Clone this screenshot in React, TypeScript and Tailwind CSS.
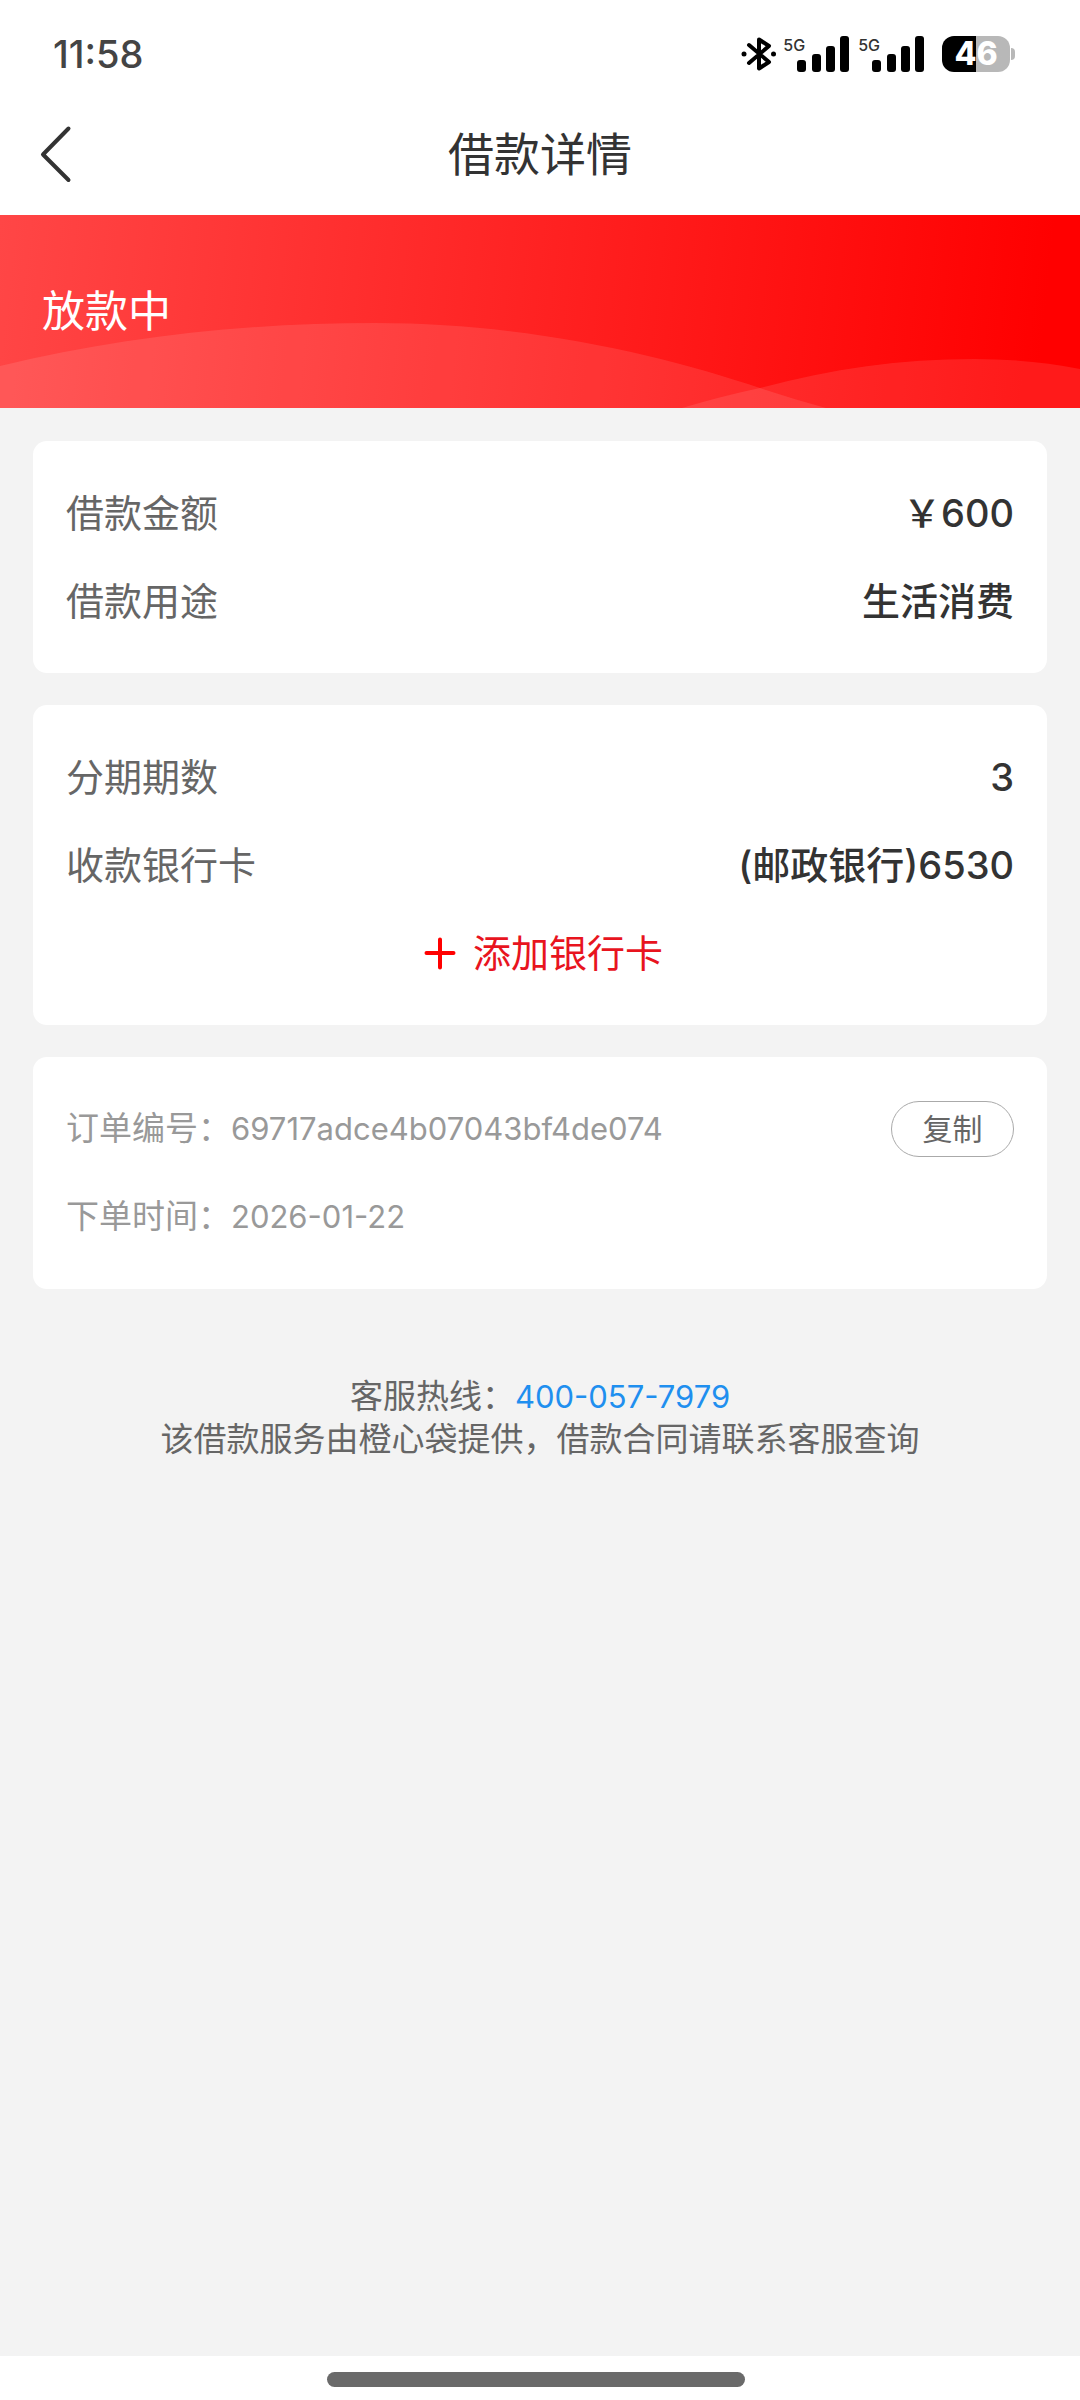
import type { ReactNode } from "react";

const SIGNAL_BARS = [
  { x: 0, y: 24 },
  { x: 15, y: 18 },
  { x: 29, y: 10 },
  { x: 43, y: 0 },
];

const LOAN_ROWS = [
  { label: "借款金额", value: "￥600" },
  { label: "借款用途", value: "生活消费" },
];

const REPAY_ROWS = [
  { label: "分期期数", value: "3" },
  { label: "收款银行卡", value: "(邮政银行)6530" },
];

const ORDER_NO = "69717adce4b07043bf4de074";

const BluetoothIcon = () => (
  <svg width="36" height="36" viewBox="0 0 36 36" fill="none" aria-hidden="true">
    <path
      d="M8 9 28 26 18 32.500V3.500L28 10 8 27"
      stroke="#000"
      strokeWidth="4"
      strokeLinejoin="round"
      strokeLinecap="round"
    />
    <circle cx="3" cy="18" r="2.500" fill="#000" />
    <circle cx="32.500" cy="18" r="2.500" fill="#000" />
  </svg>
);

const Signal = () => (
  <div className="flex">
    <span className="-mr-2 pt-0.5 text-base leading-none font-medium text-[#333]">
      5G
    </span>
    <svg width="53" height="38" viewBox="0 0 53 38" aria-hidden="true">
      {SIGNAL_BARS.map(({ x, y }) => (
        <rect key={x} x={x} y={y + 1} width="9" height={36 - y} rx="3" />
      ))}
    </svg>
  </div>
);

const Battery = () => (
  <div className="flex items-center">
    <div className="flex h-9 w-[68px] items-center justify-center rounded-xl bg-linear-to-r from-black from-50% to-[#b8b8b8] to-50% text-[32px] leading-9 font-extrabold text-white">
      46
    </div>
    <div className="ml-px h-3 w-1 rounded-r-full bg-[#b8b8b8]" />
  </div>
);

const StatusBar = () => (
  <div className="flex items-center justify-between pt-[35px] pr-[65px] pb-5 pl-[53px]">
    <span className="text-[38px] leading-[38px] font-medium text-[#444]">
      11:58
    </span>
    <div className="flex items-center">
      <BluetoothIcon />
      <div className="ml-1.5 flex gap-2">
        <Signal />
        <Signal />
      </div>
      <div className="ml-[17px]">
        <Battery />
      </div>
    </div>
  </div>
);

const Card = ({ children }: { children: ReactNode }) => (
  <section className="rounded-[14px] bg-white px-[33px] py-7">{children}</section>
);

const Row = ({ label, value }: { label: string; value: string }) => (
  <div className="flex h-[88px] items-center justify-between text-[38px]">
    <dt className="text-[#666]">{label}</dt>
    <dd className="font-medium text-[#333]">{value}</dd>
  </div>
);

const App = () => {
  return (
    <div className="flex min-h-screen flex-col bg-[#f3f3f3] font-['Inter','Noto_Sans_CJK_SC',sans-serif]">
      <header className="bg-white">
        <StatusBar />
        <div className="grid h-[122px] grid-cols-[1fr_auto_1fr] items-center px-9">
          <button type="button" aria-label="返回" className="justify-self-start">
            <svg width="40" height="60" viewBox="0 0 40 60" fill="none">
              <path
                d="M32.500 4.500 7 30.500 32.500 56"
                stroke="#333"
                strokeWidth="4"
                strokeLinecap="round"
                strokeLinejoin="round"
              />
            </svg>
          </button>
          <h1 className="text-[46px] text-[#333]">借款详情</h1>
        </div>
      </header>

      {/* Status banner */}
      <div className="relative flex h-[193px] items-center overflow-hidden bg-[linear-gradient(96deg,#ff4646,#f00_96%)] px-[42px]">
        <svg
          className="absolute inset-0 h-full w-full"
          viewBox="0 0 1080 193"
          preserveAspectRatio="none"
          aria-hidden="true"
        >
          <path
            d="M0 151C120 122 245 108 375 108C530 108 665 141 760 173Q793 184 826 193H0Z"
            fill="#fff"
            fillOpacity="0.1"
          />
          <path
            d="M682 193Q722 181 760 173C830 154 900 144 974 144Q1030 144 1080 154V193Z"
            fill="#fff"
            fillOpacity="0.1"
          />
        </svg>
        <p className="relative text-[43px] text-white">放款中</p>
      </div>

      <main className="flex flex-1 flex-col gap-8 px-[33px] pt-[33px]">
        <Card>
          <dl>
            {LOAN_ROWS.map((row) => (
              <Row key={row.label} {...row} />
            ))}
          </dl>
        </Card>

        <Card>
          <dl>
            {REPAY_ROWS.map((row) => (
              <Row key={row.label} {...row} />
            ))}
          </dl>
          <button
            type="button"
            className="flex h-[88px] w-full items-center justify-center gap-2.5 text-[38px] text-[#e8141e]"
          >
            <svg width="46" height="46" viewBox="0 0 46 46" aria-hidden="true">
              <path
                d="M23 9.500V37.500M9.500 23H36.500"
                stroke="#f00"
                strokeWidth="4"
                strokeLinecap="round"
              />
            </svg>
            添加银行卡
          </button>
        </Card>

        <Card>
          <div className="flex h-[88px] items-center justify-between text-[33px] text-[#999]">
            <p>
              订单编号：<span className="text-[31px]">{ORDER_NO}</span>
            </p>
            <button
              type="button"
              onClick={() => navigator.clipboard?.writeText(ORDER_NO)}
              className="flex h-14 w-[123px] items-center justify-center rounded-full border border-[#aaa] text-[30px] text-[#666]"
            >
              复制
            </button>
          </div>
          <div className="flex h-[88px] items-center text-[33px] text-[#999]">
            <p>
              下单时间：<span className="text-[31px]">2026-01-22</span>
            </p>
          </div>
        </Card>

        <footer className="mt-[54px] text-center text-[33px] leading-[43px] text-[#666]">
          <p>
            客服热线：
            <a href="tel:400-057-7979" className="text-[31px] text-[#1f8fef]">
              400-057-7979
            </a>
          </p>
          <p>该借款服务由橙心袋提供，借款合同请联系客服查询</p>
        </footer>
      </main>

      {/* Home indicator */}
      <div className="flex h-11 items-center justify-center bg-white pt-0.5 pr-2">
        <div className="h-[15px] w-[418px] rounded-full bg-[#6a6a6a]" />
      </div>
    </div>
  );
};

export default App;
